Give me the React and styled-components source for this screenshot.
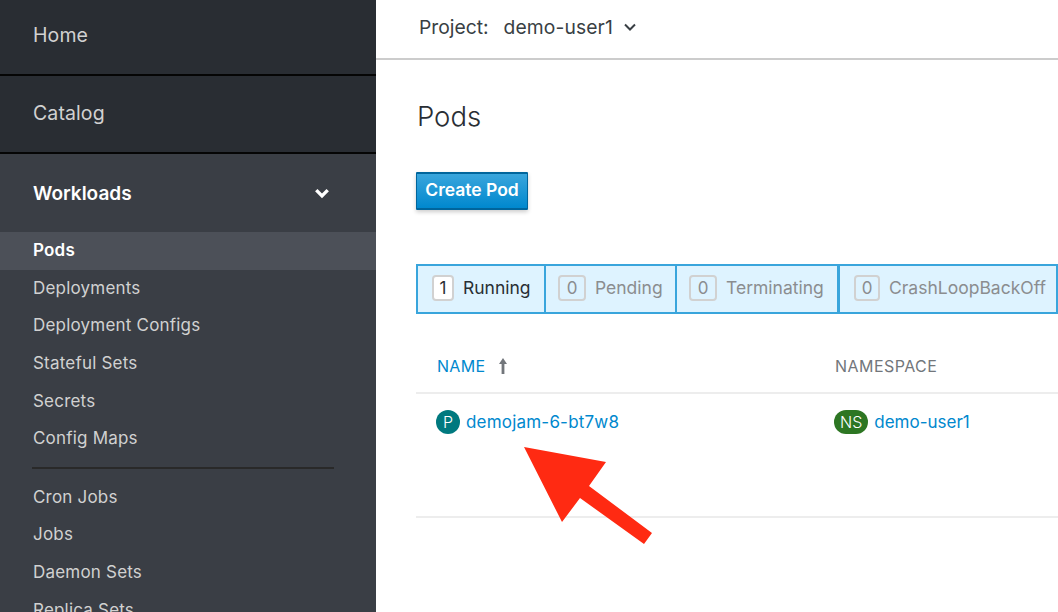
import React from 'react'
import styled, { createGlobalStyle } from 'styled-components'

const Global = createGlobalStyle`
  html, body { margin: 0; padding: 0; height: 100%; overflow: hidden; background: #fff; }
  * { box-sizing: border-box; }
  body { font-family: Inter, "Liberation Sans", sans-serif; }
`

const Page = styled.div`
  position: relative;
  display: flex;
  width: 1058px;
  height: 612px;
  overflow: hidden;
`

const Sidebar = styled.nav`
  width: 376px;
  height: 612px;
  flex: none;
  overflow: hidden;
  background: #3a3e45;
`

const TopItem = styled.div`
  height: ${p => p.$h}px;
  display: flex;
  align-items: center;
  padding: 0 0 ${p => p.$nudge}px 33px;
  font-size: 19.5px;
  letter-spacing: 0.1px;
  color: #d1d1d1;
  background: #292d33;
  border-bottom: 2px solid #050505;
`

const Section = styled.div`
  height: 78px;
  display: flex;
  align-items: center;
  justify-content: space-between;
  padding: 0 46px 0 33px;
  font-size: 19px;
  font-weight: 600;
  color: #fff;
`

const SubItem = styled.div`
  height: 37.6px;
  display: flex;
  align-items: center;
  padding: 0 0 1px 33px;
  font-size: 17px;
  letter-spacing: 0.2px;
  font-weight: ${p => (p.$active ? 600 : 400)};
  color: ${p => (p.$active ? '#fff' : '#d1d1d1')};
  background: ${p => (p.$active ? '#4c5058' : 'transparent')};
`

const SubDivider = styled.hr`
  height: 2px;
  margin: 9px 42px 10px 32px;
  border: 0;
  background: #292929;
`

const Main = styled.main`
  flex: 1;
  min-width: 0;
`

const TopBar = styled.header`
  height: 60px;
  display: flex;
  align-items: center;
  padding: 0 0 5px 43px;
  font-size: 19.3px;
  color: #393f44;
  border-bottom: 2px solid #cccccc;
`

const ProjectValue = styled.span`
  margin-left: 15px;
  display: flex;
  align-items: center;
  gap: 10px;
  letter-spacing: 0.1px;
`

const Content = styled.section`
  padding-left: 40px;
`

const Title = styled.h1`
  margin: 0;
  height: 112px;
  padding: 40px 0 0 1px;
  font-size: 27.5px;
  line-height: 32px;
  font-weight: 300;
  color: #292e34;
`

const CreateButton = styled.button`
  display: block;
  width: 112px;
  height: 38px;
  padding: 0 0 3px;
  font-family: inherit;
  font-size: 17.5px;
  font-weight: 600;
  color: #fff;
  border: 1px solid #00659c;
  border-bottom-width: 2px;
  border-top-width: 2px;
  border-radius: 1px;
  background: linear-gradient(#39a5dc, #0088ce);
  box-shadow: 0 2px 4px rgba(0, 0, 0, 0.2);
`

const FilterBar = styled.div`
  display: flex;
  width: 642px;
  height: 50px;
  margin-top: 54px;
  background: #def3ff;
  border: 2px solid #39a5dc;
`

const Filter = styled.div`
  width: ${p => p.$w}px;
  flex: none;
  display: flex;
  align-items: center;
  gap: 9px;
  padding: 0 0 3px ${p => p.$pad}px;
  font-size: 17.5px;
  color: ${p => (p.$on ? '#292e34' : '#8b8d8f')};
  border-right: ${p => (p.$last ? 0 : p.$thick ? 3 : 2)}px solid #39a5dc;
`

const Count = styled.span`
  width: ${p => p.$w}px;
  height: 26px;
  display: flex;
  align-items: center;
  justify-content: center;
  border: 2px solid #d1d1d1;
  border-radius: 4px;
  font-size: 17px;
  background: ${p => (p.$on ? '#fff' : 'transparent')};
`

const HeadRow = styled.div`
  display: flex;
  align-items: flex-end;
  height: 80px;
  padding: 0 0 16px 21px;
  border-bottom: 2px solid #ededed;
`

const BodyRow = styled.div`
  display: flex;
  align-items: flex-start;
  height: 124px;
  padding: 16px 0 0 20px;
  border-bottom: 2px solid #ededed;
`

const NameHead = styled.div`
  width: 398px;
  flex: none;
  display: flex;
  align-items: center;
  gap: 12px;
`

const NameCell = styled.div`
  width: 398px;
  flex: none;
  display: flex;
  align-items: center;
`

const NamespaceCell = styled.div`
  display: flex;
  align-items: center;
`

const HeadLink = styled.span`
  font-size: 16px;
  letter-spacing: ${p => (p.$sorted ? 0.3 : 0.45)}px;
  color: ${p => (p.$sorted ? '#0088ce' : '#72767b')};
`

const Link = styled.a`
  font-size: 17px;
  color: #0088ce;
  letter-spacing: ${p => p.$track}px;
`

const Badge = styled.span`
  height: 24px;
  min-width: 24px;
  padding: 0 ${p => (p.$wide ? 6 : 0)}px;
  margin-right: 6px;
  display: inline-flex;
  align-items: center;
  justify-content: center;
  border-radius: 12px;
  font-size: 16px;
  font-weight: 300;
  color: #fff;
  background: ${p => p.$bg};
`

const Pointer = styled.svg`
  position: absolute;
  left: 520px;
  top: 443px;
`

const Chevron = ({ size, width, color }) => (
  <svg width={size} height={size} viewBox="0 0 14 14" fill="none">
    <path d="M2 4.5 L7 9.5 L12 4.5" stroke={color} strokeWidth={width} />
  </svg>
)

const filters = [
  { label: 'Running', n: 1, on: true, w: 128, pad: 14, box: 22 },
  { label: 'Pending', n: 0, w: 131, pad: 12, box: 28 },
  { label: 'Terminating', n: 0, w: 163, pad: 12, thick: true, box: 28 },
  { label: 'CrashLoopBackOff', n: 0, w: 216, pad: 14, last: true, box: 26 },
]

const workloads = ['Deployments', 'Deployment Configs', 'Stateful Sets', 'Secrets', 'Config Maps']
const jobs = ['Cron Jobs', 'Jobs', 'Daemon Sets', 'Replica Sets']

export default function App() {
  return (
    <Page>
      <Global />
      <Sidebar>
        <TopItem $h={76} $nudge={4}>Home</TopItem>
        <TopItem $h={78} $nudge={2}>Catalog</TopItem>
        <Section>
          Workloads
          <Chevron size={16} width={3} color="#fff" />
        </Section>
        <SubItem $active>Pods</SubItem>
        {workloads.map(w => <SubItem key={w}>{w}</SubItem>)}
        <SubDivider />
        {jobs.map(j => <SubItem key={j}>{j}</SubItem>)}
      </Sidebar>
      <Main>
        <TopBar>
          Project:
          <ProjectValue>
            demo-user1
            <Chevron size={14} width={2} color="#393f44" />
          </ProjectValue>
        </TopBar>
        <Content>
          <Title>Pods</Title>
          <CreateButton>Create Pod</CreateButton>
          <FilterBar>
            {filters.map(f => (
              <Filter key={f.label} $w={f.w} $pad={f.pad} $on={f.on} $last={f.last} $thick={f.thick}>
                <Count $on={f.on} $w={f.box}>{f.n}</Count>
                {f.label}
              </Filter>
            ))}
          </FilterBar>
          <HeadRow>
            <NameHead>
              <HeadLink $sorted>NAME</HeadLink>
              <svg width="12" height="18" viewBox="0 0 12 18">
                <path d="M6 1 L10 7 H7.4 V17 H4.6 V7 H2 Z" fill="#72767b" />
              </svg>
            </NameHead>
            <HeadLink>NAMESPACE</HeadLink>
          </HeadRow>
          <BodyRow>
            <NameCell>
              <Badge $bg="#00797f">P</Badge>
              <Link $track={0.2}>demojam-6-bt7w8</Link>
            </NameCell>
            <NamespaceCell>
              <Badge $bg="#2d7623" $wide>NS</Badge>
              <Link $track={0}>demo-user1</Link>
            </NamespaceCell>
          </BodyRow>
        </Content>
      </Main>
      <Pointer width="136" height="105" viewBox="0 0 136 105">
        <path d="M4 4 L86 19 L69 43 L132 90 L124 101 L60 55 L42 79 Z" fill="#ff2a12" />
      </Pointer>
    </Page>
  )
}
